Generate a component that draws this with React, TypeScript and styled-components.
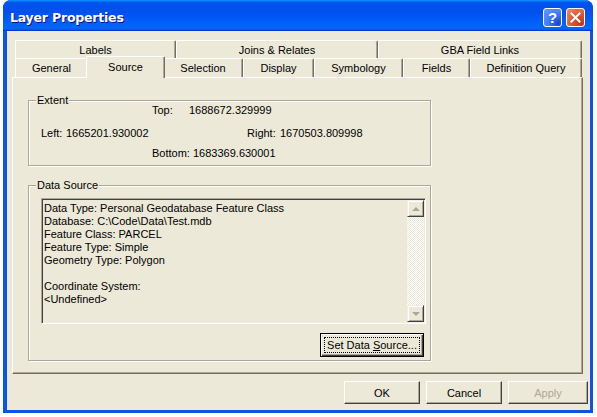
import styled, { createGlobalStyle } from "styled-components";

const GlobalStyle = createGlobalStyle`
  html, body {
    margin: 0;
    padding: 0;
    background: #fff;
  }
  body {
    font-family: "Liberation Sans", Arial, sans-serif;
    font-size: 11px;
    color: #000;
  }
`;

const topTabs = [
  { label: "Labels", w: 161 },
  { label: "Joins & Relates", w: 202 },
  { label: "GBA Field Links", w: 204 },
];

const frontTabs = [
  { label: "General", w: 73 },
  { label: "Source", w: 75, active: true },
  { label: "Selection", w: 80 },
  { label: "Display", w: 71 },
  { label: "Symbology", w: 89 },
  { label: "Fields", w: 67 },
  { label: "Definition Query", w: 112 },
];

const sourceLines = [
  "Data Type: Personal Geodatabase Feature Class",
  "Database: C:\\Code\\Data\\Test.mdb",
  "Feature Class: PARCEL",
  "Feature Type: Simple",
  "Geometry Type: Polygon",
  "",
  "Coordinate System:",
  "<Undefined>",
];

const App = () => {
  return (
    <>
      <GlobalStyle />
      <Window>
        <TitleBar>
          <Title>Layer Properties</Title>
          <CaptionButtons>
            <HelpButton>?</HelpButton>
            <CloseButton>
              <svg width="11" height="11" viewBox="0 0 11 11">
                <path d="M1.5 1.5 L9.5 9.5 M9.5 1.5 L1.5 9.5" stroke="#fff" strokeWidth="2" strokeLinecap="square" />
              </svg>
            </CloseButton>
          </CaptionButtons>
        </TitleBar>
        <Frame>
          <Client>
            <TabStrip>
              <TabRow $h={18}>
                {topTabs.map((t) => (
                  <Tab key={t.label} $w={t.w}>
                    {t.label}
                  </Tab>
                ))}
              </TabRow>
              <TabRow $h={19}>
                {frontTabs.map((t) => (
                  <Tab key={t.label} $w={t.w} $active={t.active}>
                    {t.label}
                  </Tab>
                ))}
              </TabRow>
            </TabStrip>
            <Panel>
              <Group $h={66}>
                <Legend>Extent</Legend>
                <ExtentGrid>
                  <span />
                  <Pair>
                    <PairLabel $w={37}>Top:</PairLabel>
                    1688672.329999
                  </Pair>
                  <span />
                  <Pair>
                    <PairLabel $w={25}>Left:</PairLabel>
                    1665201.930002
                  </Pair>
                  <span />
                  <Pair>
                    <PairLabel $w={33}>Right:</PairLabel>
                    1670503.809998
                  </Pair>
                  <span />
                  <Pair>
                    <PairLabel $w={41}>Bottom:</PairLabel>
                    1683369.630001
                  </Pair>
                  <span />
                </ExtentGrid>
              </Group>
              <Group $h={176} $gap={19}>
                <Legend>Data Source</Legend>
                <SourceBody>
                  <ReadOnlyBox>
                    <BoxText>
                      {sourceLines.map((line, i) => (
                        <Line key={i}>{line}</Line>
                      ))}
                    </BoxText>
                    <ScrollBar>
                      <ScrollButton>
                        <Arrow $dir="up" />
                      </ScrollButton>
                      <ScrollTrack />
                      <ScrollButton>
                        <Arrow $dir="down" />
                      </ScrollButton>
                    </ScrollBar>
                  </ReadOnlyBox>
                  <SourceActions>
                    <DefaultButton>
                      <FocusRing>
                        <span>
                          Set Data <u>S</u>ource...
                        </span>
                      </FocusRing>
                    </DefaultButton>
                  </SourceActions>
                </SourceBody>
              </Group>
            </Panel>
            <Footer>
              <PushButton $w={76}>OK</PushButton>
              <PushButton $w={76}>Cancel</PushButton>
              <PushButton $w={80} disabled>
                Apply
              </PushButton>
            </Footer>
          </Client>
        </Frame>
      </Window>
    </>
  );
};

const Window = styled.div`
  width: 590px;
  height: 413px;
  margin-left: 3px;
  display: flex;
  flex-direction: column;
  border-radius: 8px 8px 0 0;
  overflow: hidden;
  background: #0a4fe0;
`;

const TitleBar = styled.div`
  height: 31px;
  box-sizing: border-box;
  padding: 4px 8px 0 7px;
  display: flex;
  align-items: center;
  justify-content: space-between;
  background: linear-gradient(
    180deg,
    #0997ff,
    #0053ee 8%,
    #0050ee 40%,
    #06f 88%,
    #06f 93%,
    #005bff 95%,
    #003dd7 96%,
    #003dd7
  );
`;

const Title = styled.div`
  color: #fff;
  font-family: "DejaVu Sans", "Liberation Sans", sans-serif;
  font-weight: bold;
  font-size: 12.5px;
  letter-spacing: -0.2px;
  text-shadow: 1px 1px #0f1089;
`;

const CaptionButtons = styled.div`
  display: flex;
  gap: 4px;
`;

const CaptionButton = styled.div`
  width: 19px;
  height: 19px;
  box-sizing: border-box;
  border: 1px solid #fff;
  border-radius: 3px;
  display: flex;
  align-items: center;
  justify-content: center;
`;

const HelpButton = styled(CaptionButton)`
  background: radial-gradient(circle at 85% 85%, #1a44c8 0%, #3c79f2 45%, #6a9cf6 100%);
  color: #fff;
  font-family: "Liberation Sans", Arial, sans-serif;
  font-weight: bold;
  font-size: 15px;
  line-height: 1;
`;

const CloseButton = styled(CaptionButton)`
  background: radial-gradient(circle at 85% 85%, #c23a14 0%, #dd5530 45%, #ee8a6a 100%);
`;

const Frame = styled.div`
  flex: 1;
  display: flex;
  border-style: solid;
  border-color: #0b55e6;
  border-width: 0 3px 3px 4px;
  box-shadow: inset 1px 0 #0831d9;
`;

const Client = styled.div`
  flex: 1;
  display: flex;
  flex-direction: column;
  background: #ece9d8;
  padding: 9px 2px 6px 5px;
`;

const TabStrip = styled.div`
  display: flex;
  flex-direction: column;
  padding: 0 1px 0 3px;
  margin-right: 5px;
`;

const TabRow = styled.div<{ $h: number }>`
  display: flex;
  align-items: flex-start;
  height: ${({ $h }) => $h}px;
`;

const Tab = styled.div<{ $w: number; $active?: boolean }>`
  position: relative;
  z-index: ${({ $active }) => ($active ? 1 : 0)};
  box-sizing: border-box;
  width: ${({ $w, $active }) => ($active ? $w + 4 : $w)}px;
  height: ${({ $active }) => ($active ? "22px" : "100%")};
  margin: ${({ $active }) => ($active ? "-2px -2px 0 -2px" : "0")};
  padding-bottom: ${({ $active }) => ($active ? "2px" : "0")};
  display: flex;
  align-items: center;
  justify-content: center;
  background: #ece9d8;
  border-top: 1px solid #fff;
  border-left: 1px solid #fff;
  border-right: 1px solid #716f64;
  border-radius: 2px 2px 0 0;
  box-shadow: inset -1px 0 #aca899;
  white-space: nowrap;
`;

const Panel = styled.div`
  height: 297px;
  box-sizing: border-box;
  margin-right: 5px;
  padding: 22px 0 0 15px;
  background: #ece9d8;
  border-top: 1px solid #fff;
  border-left: 1px solid #fff;
  border-right: 1px solid #716f64;
  border-bottom: 1px solid #716f64;
  box-shadow: inset -1px -1px #aca899;
`;

const Group = styled.div<{ $h: number; $gap?: number }>`
  position: relative;
  width: 403px;
  height: ${({ $h }) => $h}px;
  box-sizing: border-box;
  margin-top: ${({ $gap }) => $gap ?? 0}px;
  border: 1px solid #aca899;
  box-shadow: inset 1px 1px #fff, 1px 1px #fff;
`;

const Legend = styled.div`
  position: absolute;
  top: -7px;
  left: 7px;
  padding: 0 1px;
  line-height: 13px;
  background: #ece9d8;
`;

const ExtentGrid = styled.div`
  display: grid;
  grid-template-columns: 111px 95px 1fr;
  grid-template-rows: 16px 23px 20px;
  align-items: end;
  padding-left: 12px;
  line-height: 13px;
`;

const Pair = styled.div`
  display: flex;
  white-space: nowrap;
`;

const PairLabel = styled.span<{ $w: number }>`
  width: ${({ $w }) => $w}px;
  flex: none;
`;

const SourceBody = styled.div`
  display: flex;
  flex-direction: column;
  padding: 12px 5px 0 12px;
`;

const ReadOnlyBox = styled.div`
  width: 385px;
  height: 126px;
  box-sizing: border-box;
  display: flex;
  border: 1px solid;
  border-color: #aca899 #fff #fff #aca899;
  box-shadow: inset 1px 1px #404040, inset -1px -1px #f1efe2;
  padding: 1px;
`;

const BoxText = styled.div`
  flex: 1;
  padding: 2px 0 0 1px;
  line-height: 13px;
`;

const Line = styled.div`
  height: 13px;
  white-space: pre;
`;

const ScrollBar = styled.div`
  width: 17px;
  display: flex;
  flex-direction: column;
`;

const ScrollButton = styled.div`
  height: 17px;
  box-sizing: border-box;
  display: flex;
  align-items: center;
  justify-content: center;
  background: #ece9d8;
  border: 1px solid;
  border-color: #f1efe2 #404040 #404040 #f1efe2;
  box-shadow: inset 1px 1px #fff, inset -1px -1px #aca899;
`;

const Arrow = styled.span<{ $dir: "up" | "down" }>`
  width: 0;
  height: 0;
  border-left: 4px solid transparent;
  border-right: 4px solid transparent;
  ${({ $dir }) =>
    $dir === "up" ? "border-bottom: 4px solid #aca899;" : "border-top: 4px solid #aca899;"}
`;

const ScrollTrack = styled.div`
  flex: 1;
  background: repeating-conic-gradient(#fff 0 25%, #ece9d8 0 50%) 0 0 / 2px 2px;
`;

const SourceActions = styled.div`
  display: flex;
  justify-content: flex-end;
  margin-top: 9px;
  padding-right: 1px;
`;

const DefaultButton = styled.button`
  width: 104px;
  height: 24px;
  box-sizing: border-box;
  padding: 3px;
  display: flex;
  font: inherit;
  color: #000;
  background: #ece9d8;
  border: 1px solid #000;
  border-radius: 0;
  box-shadow: inset 1px 1px #fff, inset -1px -1px #404040, inset -2px -2px #aca899;
`;

const FocusRing = styled.span`
  flex: 1;
  display: flex;
  align-items: center;
  justify-content: center;
  border: 1px dotted #000;
  white-space: nowrap;

  u {
    text-decoration-thickness: 1px;
    text-underline-offset: 1px;
  }
`;

const Footer = styled.div`
  display: flex;
  justify-content: flex-end;
  gap: 6px;
  margin-top: 7px;
`;

const PushButton = styled.button<{ $w: number }>`
  width: ${({ $w }) => $w}px;
  height: 23px;
  box-sizing: border-box;
  padding: 0;
  font: inherit;
  color: #000;
  background: #ece9d8;
  border: 1px solid;
  border-color: #fff #404040 #404040 #fff;
  border-radius: 0;
  box-shadow: inset -1px -1px #aca899;

  &:disabled {
    color: #aca899;
  }
`;

export default App;
